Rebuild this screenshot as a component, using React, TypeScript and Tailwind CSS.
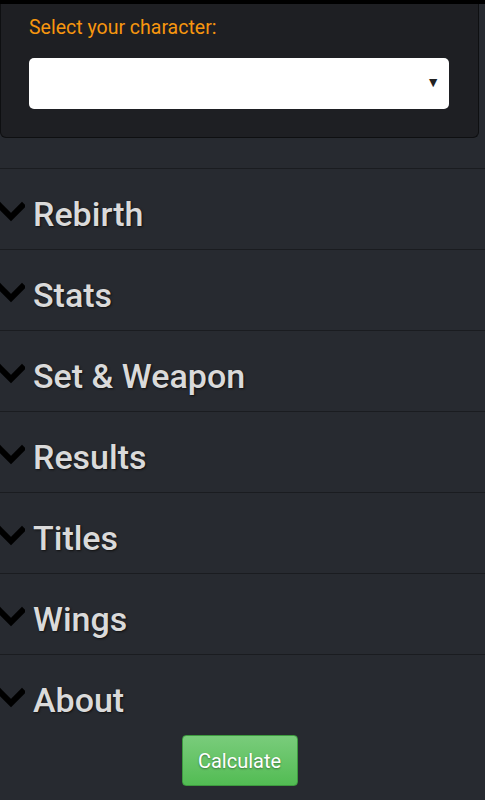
import React from "react";

const items = ["Rebirth", "Stats", "Set & Weapon", "Results", "Titles", "Wings", "About"];

function Chevron() {
  return (
    <svg width="28" height="22" viewBox="0 0 28 22" className="absolute left-[-3px] top-[32px]">
      <polyline points="3,5 14,16 25,5" fill="none" stroke="#000" strokeWidth="6" strokeLinecap="square" />
    </svg>
  );
}

export default function App() {
  return (
    <div className="min-h-[800px] bg-[#272a30] font-['Roboto',sans-serif]">
      <div className="h-[4px] bg-black" />
      <div className="mr-[6px] rounded-b-[6px] border border-t-0 border-[#0e0f11] bg-[#1e1f23] pl-[28px] pr-[29px] pt-[12px] pb-[28px]">
        <div className="text-[19.5px] leading-[24px] text-[#f7960f]">Select your character:</div>
        <div className="relative mt-[18px] h-[51px] rounded-[5px] bg-white">
          <span className="absolute right-[9px] top-[14px] text-[14px] text-[#222]">▼</span>
        </div>
      </div>
      <div className="mt-[30px]">
        {items.map((t) => (
          <div key={t} className="relative h-[81px] border-t border-[#1a1c20]">
            <Chevron />
            <div
              className="pl-[33px] pt-[25px] text-[34px] font-medium leading-[40px] text-[#dadada]"
              style={{ textShadow: "1px 1px 2px #111" }}
            >
              {t}
            </div>
          </div>
        ))}
      </div>
      <div className="flex justify-center pr-[6px]">
        <button
          className="h-[51px] w-[116px] rounded-[4px] border border-[#3d9a3f] bg-gradient-to-b from-[#79cc7b] to-[#52bc53] text-[20px] text-white"
          style={{ textShadow: "0 1px 2px rgba(0,0,0,0.4)" }}
        >
          Calculate
        </button>
      </div>
    </div>
  );
}
